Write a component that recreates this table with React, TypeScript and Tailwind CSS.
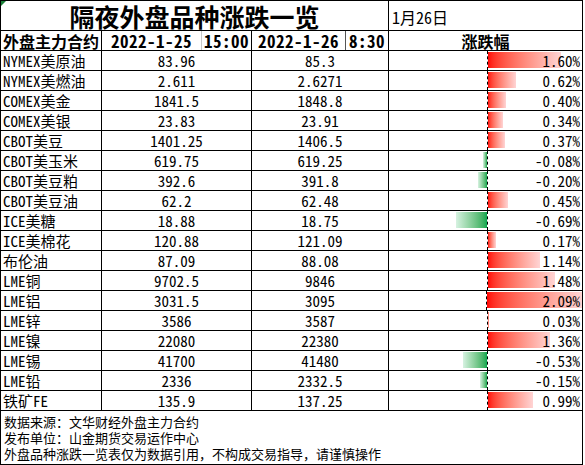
import React from "react"

const rows = [
  { name: "NYMEX美原油", prev: "83.96", now: "85.3", pct: 1.6 },
  { name: "NYMEX美燃油", prev: "2.611", now: "2.6271", pct: 0.62 },
  { name: "COMEX美金", prev: "1841.5", now: "1848.8", pct: 0.4 },
  { name: "COMEX美银", prev: "23.83", now: "23.91", pct: 0.34 },
  { name: "CBOT美豆", prev: "1401.25", now: "1406.5", pct: 0.37 },
  { name: "CBOT美玉米", prev: "619.75", now: "619.25", pct: -0.08 },
  { name: "CBOT美豆粕", prev: "392.6", now: "391.8", pct: -0.2 },
  { name: "CBOT美豆油", prev: "62.2", now: "62.48", pct: 0.45 },
  { name: "ICE美糖", prev: "18.88", now: "18.75", pct: -0.69 },
  { name: "ICE美棉花", prev: "120.88", now: "121.09", pct: 0.17 },
  { name: "布伦油", prev: "87.09", now: "88.08", pct: 1.14 },
  { name: "LME铜", prev: "9702.5", now: "9846", pct: 1.48 },
  { name: "LME铝", prev: "3031.5", now: "3095", pct: 2.09 },
  { name: "LME锌", prev: "3586", now: "3587", pct: 0.03 },
  { name: "LME镍", prev: "22080", now: "22380", pct: 1.36 },
  { name: "LME锡", prev: "41700", now: "41480", pct: -0.53 },
  { name: "LME铅", prev: "2336", now: "2332.5", pct: -0.15 },
  { name: "铁矿FE", prev: "135.9", now: "137.25", pct: 0.99 },
]

// px per 1% on the data bar
const scale = 45.5

export default function App() {
  return (
    <div className="w-[585px] h-[465px] bg-white text-black font-['Noto_Sans_Mono_CJK_SC','Liberation_Mono','Noto_Sans_CJK_SC',monospace] text-[15px] leading-none">
      <div className="relative w-[583px] border-l border-t border-black grid grid-cols-[101px_150px_137px_194px]">
        <div className="absolute left-0 top-0 w-0 h-0 border-t-[5px] border-r-[5px] border-t-[#1a7f37] border-r-transparent" />

        {/* title row */}
        <div className="col-span-3 h-[30px] border-r border-b border-black flex items-center justify-center font-['Noto_Sans_CJK_SC',sans-serif] font-bold text-[25px] leading-[26px]">
          隔夜外盘品种涨跌一览
        </div>
        <div className="h-[30px] border-r border-b border-black flex items-center pl-[3px] pt-[2px] text-[16px] font-medium">
          1月26日
        </div>

        {/* header row */}
        <div className="h-[20px] border-r border-b border-black flex items-center pl-[2px] font-bold text-[16px] font-['Noto_Sans_CJK_SC',sans-serif]">
          外盘主力合约
        </div>
        <div className="h-[20px] border-r border-b border-black flex font-bold text-[17px] tracking-[0.5px]">
          <span className="w-[100px] flex items-center justify-center border-r border-[#c8c8c8]">2022-1-25</span>
          <span className="flex-1 flex items-center justify-center">15:00</span>
        </div>
        <div className="h-[20px] border-r border-b border-black flex font-bold text-[17px] tracking-[0.5px]">
          <span className="w-[94px] flex items-center justify-center border-r border-[#555]">2022-1-26</span>
          <span className="flex-1 flex items-center justify-center">8:30</span>
        </div>
        <div className="h-[20px] border-r border-b border-black flex items-center justify-center font-bold text-[16px] font-['Noto_Sans_CJK_SC',sans-serif]">
          涨跌幅
        </div>

        {rows.map((r) => (
          <React.Fragment key={r.name}>
            <div className="h-[20px] border-r border-b border-black flex items-center pl-[2px] whitespace-nowrap">
              {r.name}
            </div>
            <div className="h-[20px] border-r border-b border-black flex items-center justify-center">{r.prev}</div>
            <div className="h-[20px] border-r border-b border-black flex items-center justify-center">{r.now}</div>
            <div className="relative h-[20px] border-r border-b border-black flex pt-[1px] pb-[2px]">
              <div className="w-[98px] flex justify-end">
                {r.pct < 0 && (
                  <div
                    className="h-full bg-linear-to-l from-[#00a84f] to-[#d6f2e1]"
                    style={{ width: Math.max(3, Math.round(-r.pct * scale)) }}
                  />
                )}
              </div>
              <div className="-mt-[1px] -mb-[2px] border-l border-dashed border-black" />
              <div className="flex-1 flex">
                {r.pct > 0 && (
                  <div
                    className="h-full bg-linear-to-r from-[#ff0000] to-[#ffd4d4]"
                    style={{ width: Math.max(1, Math.round(r.pct * scale)) }}
                  />
                )}
              </div>
              <span className="absolute right-[2px] top-0 h-full flex items-center">
                {r.pct.toFixed(2)}%
              </span>
            </div>
          </React.Fragment>
        ))}

        {/* footer */}
        <div className="col-span-4 h-[54px] border-r border-b border-black pl-[3px] pt-[3px] text-[13px] leading-[16px] font-['Noto_Sans_CJK_SC',sans-serif]">
          <div>数据来源：文华财经外盘主力合约</div>
          <div>发布单位：山金期货交易运作中心</div>
          <div>外盘品种涨跌一览表仅为数据引用，不构成交易指导，请谨慎操作</div>
        </div>
      </div>
    </div>
  )
}
